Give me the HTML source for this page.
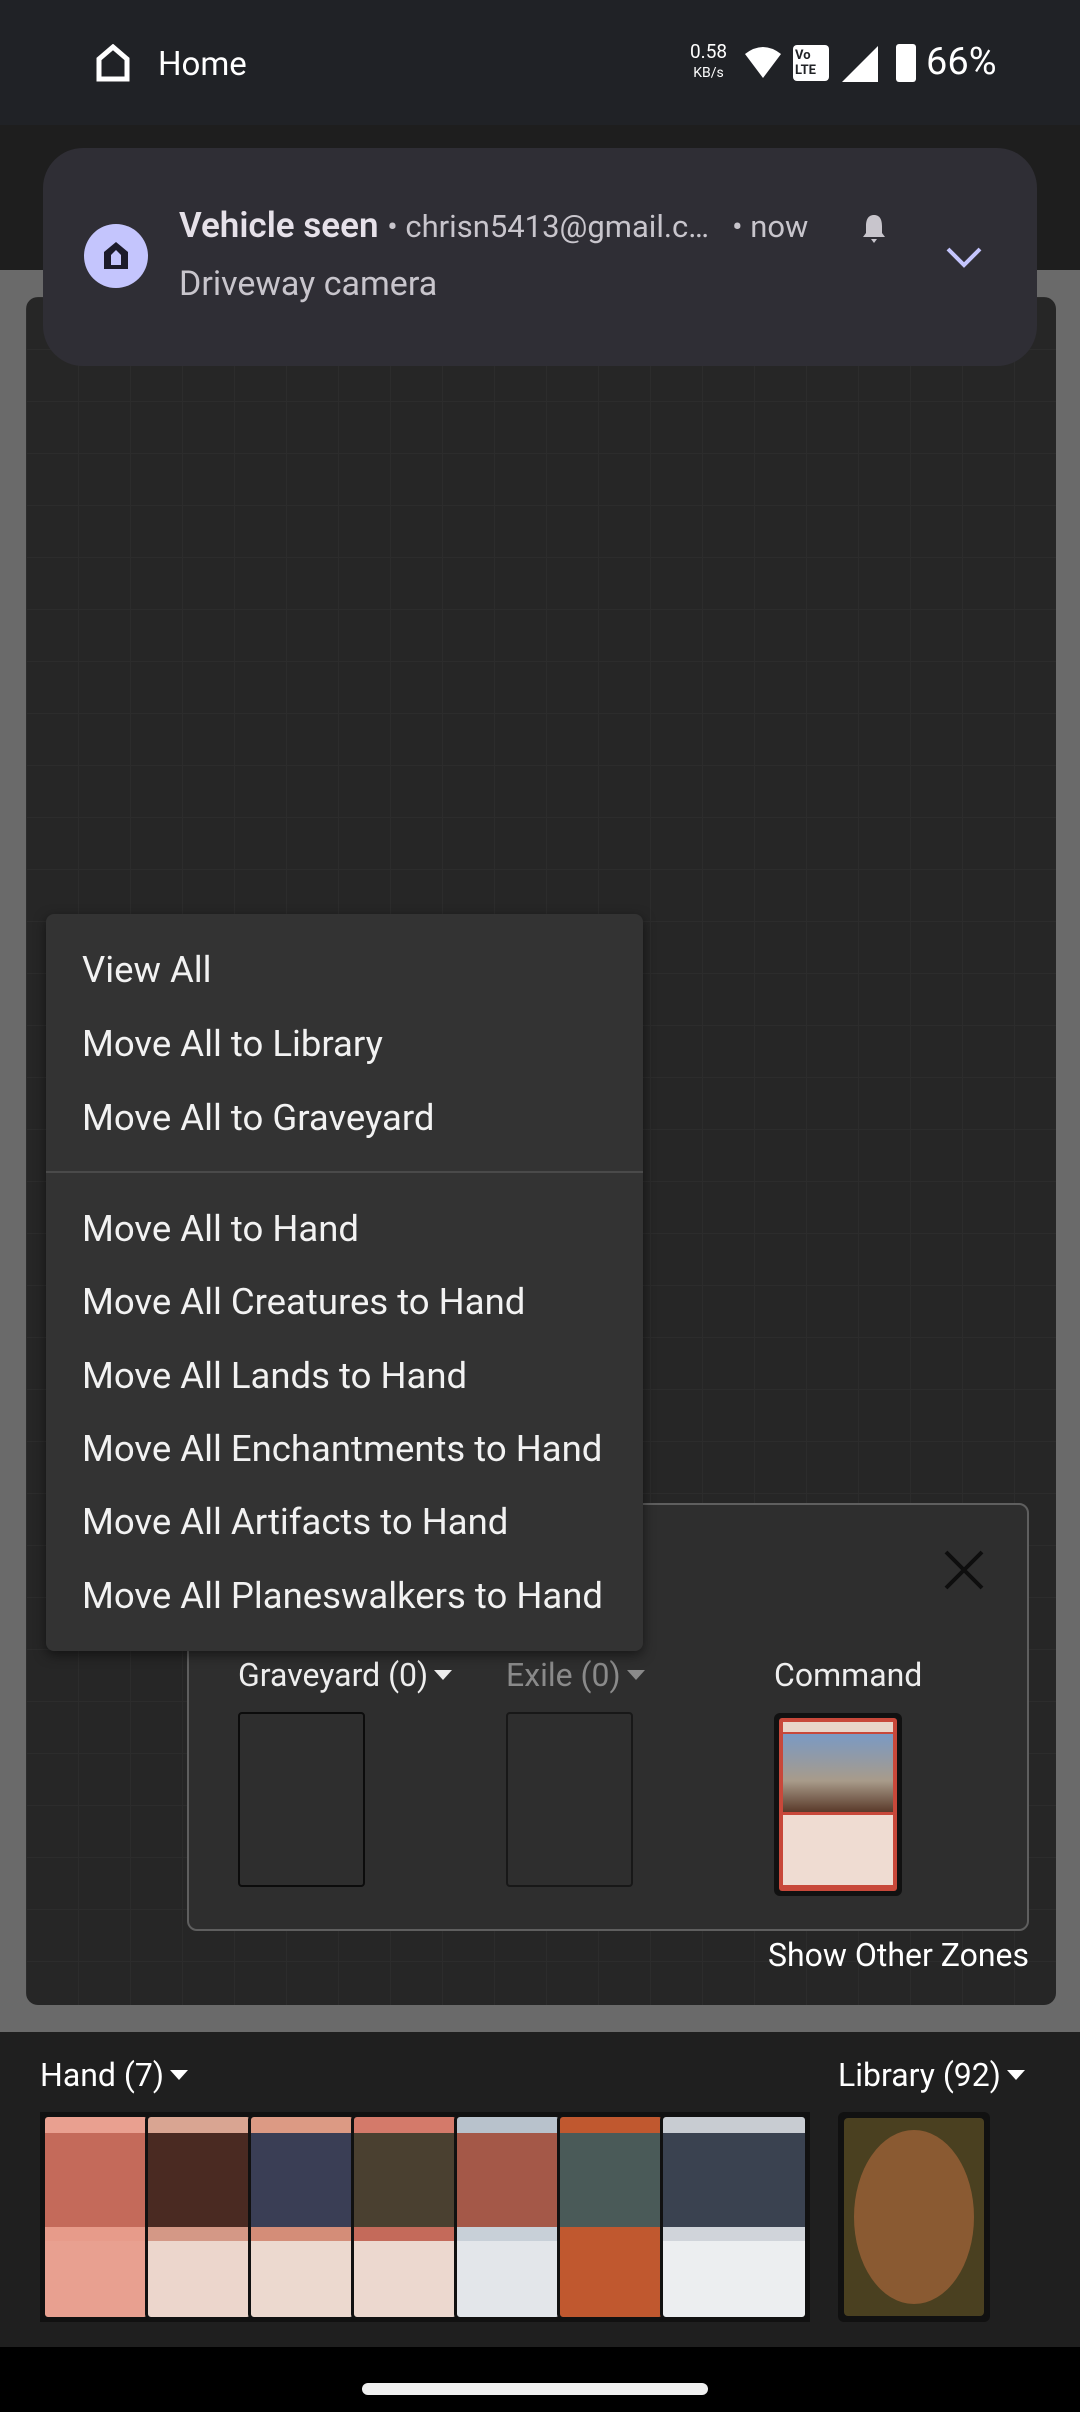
<!DOCTYPE html>
<html><head><meta charset="utf-8"><style>
*{margin:0;padding:0;box-sizing:border-box}
body{width:1080px;height:2412px;background:#6a6a6a;font-family:"Roboto","Liberation Sans",sans-serif;color:#fff;position:relative;overflow:hidden}
.abs{position:absolute}
.mi{position:absolute;left:36px;font-size:36.5px;color:#f2f2f2;white-space:nowrap}
.card{position:absolute;top:2114px;height:206px;border-radius:6px;overflow:hidden;border:3px solid #111}
.ar{display:inline-block;width:0;height:0;border-left:9px solid transparent;border-right:9px solid transparent;border-top:10px solid currentColor;vertical-align:middle;margin-left:6px;margin-top:-6px}
</style></head><body>
<div class="abs" style="left:0;top:0;width:1080px;height:125px;background:#202226"></div>
<div class="abs" style="left:0;top:125px;width:1080px;height:145px;background:#1e1e1e"></div>
<svg class="abs" style="left:96px;top:44px" width="34" height="38" viewBox="0 0 34 38"><path d="M3 35V15L17 3L31 15V35Z" fill="none" stroke="#fff" stroke-width="5"/></svg>
<div class="abs" style="left:158px;top:45px;font-size:33px">Home</div>
<div class="abs" style="left:690px;top:42px;font-size:19px;line-height:19px;text-align:center">0.58<br><span style="font-size:14px">KB/s</span></div>
<svg class="abs" style="left:743px;top:46px" width="40" height="34"><path d="M2 8Q20 -6 38 8L20 32Z" fill="#fff"/></svg>
<div class="abs" style="left:793px;top:45px;width:36px;height:36px;background:#fff;border-radius:4px;color:#202226;font-size:13px;line-height:15px;padding:3px 2px;font-weight:bold">Vo<br>LTE</div>
<svg class="abs" style="left:842px;top:46px" width="36" height="36"><path d="M36 0V36H0Z" fill="#fff"/></svg>
<div class="abs" style="left:896px;top:44px;width:20px;height:38px;background:#fff;border-radius:3px"></div>
<div class="abs" style="left:926px;top:40px;font-size:38px">66%</div>

<div class="abs" style="left:26px;top:297px;width:1030px;height:1708px;background-color:#262626;border-radius:12px;background-image:linear-gradient(#2c2c2c 1px,transparent 1px),linear-gradient(90deg,#2c2c2c 1px,transparent 1px);background-size:52px 52px"></div>

<div class="abs" style="left:43px;top:148px;width:994px;height:218px;background:#2f2e35;border-radius:40px"></div>
<div class="abs" style="left:84px;top:224px;width:64px;height:64px;border-radius:50%;background:#c4c5fd"></div>
<svg class="abs" style="left:100px;top:238px" width="32" height="34"><path d="M4 31V14L16 4L28 14V31Z" fill="#1c1b2a"/><path d="M11 27V17L16 12L21 17V27Z" fill="#c4c5fd"/></svg>
<div class="abs" style="left:179px;top:205px;font-size:35px;color:#e6e1e9;white-space:nowrap"><b style="font-weight:600">Vehicle seen</b> <span style="font-size:31px;color:#c8c5cc">• chrisn5413@gmail.c…&nbsp;&nbsp; • now</span></div>
<svg class="abs" style="left:860px;top:212px" width="28" height="32"><path d="M14 3C8 3 6 8 6 14V21L3 25H25L22 21V14C22 8 20 3 14 3ZM11 27H17L14 31Z" fill="#c8c5cc"/></svg>
<div class="abs" style="left:179px;top:264px;font-size:34px;color:#c8c5cc">Driveway camera</div>
<svg class="abs" style="left:944px;top:245px" width="40" height="24"><path d="M4 4L20 20L36 4" fill="none" stroke="#c4c5fd" stroke-width="4"/></svg>

<div class="abs" style="left:187px;top:1503px;width:842px;height:428px;background:#2e2e2e;border:2px solid #5f5f5f;border-radius:10px"></div>
<svg class="abs" style="left:944px;top:1550px" width="40" height="40"><path d="M2 2L38 38M38 2L2 38" stroke="#0e0e0e" stroke-width="4"/></svg>
<div class="abs" style="left:238px;top:1656px;font-size:32px;color:#eee">Graveyard (0)<span class="ar"></span></div>
<div class="abs" style="left:506px;top:1656px;font-size:32px;color:#8a8a8a">Exile (0)<span class="ar"></span></div>
<div class="abs" style="left:774px;top:1656px;font-size:32px;color:#eee">Command</div>
<div class="abs" style="left:238px;top:1712px;width:127px;height:175px;border:2px solid #0c0c0c;border-radius:4px"></div>
<div class="abs" style="left:506px;top:1712px;width:127px;height:175px;border:2px solid #181818;border-radius:4px"></div>
<div class="abs" style="left:774px;top:1713px;width:128px;height:183px;background:#111;border-radius:6px;padding:5px">
<div style="height:100%;background:#c8483a;border-radius:3px;padding:4px">
<div style="height:10px;background:#e9d5c9"></div>
<div style="height:78px;background:linear-gradient(#7a9ac4,#a89b8a 60%,#5a3a2a);margin-top:2px"></div>
<div style="height:70px;background:#efdcd2;margin-top:3px"></div></div></div>
<div class="abs" style="left:1029px;top:1936px;font-size:32px;transform:translateX(-100%);white-space:nowrap">Show Other Zones</div>

<div class="abs" style="left:46px;top:914px;width:597px;height:737px;background:#333333;border-radius:8px;box-shadow:0 4px 12px rgba(0,0,0,.5)">
<div class="mi" style="top:34px">View All</div>
<div class="mi" style="top:108px">Move All to Library</div>
<div class="mi" style="top:182px">Move All to Graveyard</div>
<div class="abs" style="left:0;top:257px;width:597px;height:2px;background:#4a4a4a"></div>
<div class="mi" style="top:293px">Move All to Hand</div>
<div class="mi" style="top:366px">Move All Creatures to Hand</div>
<div class="mi" style="top:440px">Move All Lands to Hand</div>
<div class="mi" style="top:513px">Move All Enchantments to Hand</div>
<div class="mi" style="top:586px">Move All Artifacts to Hand</div>
<div class="mi" style="top:660px">Move All Planeswalkers to Hand</div>
</div>

<div class="abs" style="left:0;top:2032px;width:1080px;height:316px;background:#1f1f1f"></div>
<div class="abs" style="left:40px;top:2056px;font-size:32px">Hand (7)<span class="ar"></span></div>
<div class="abs" style="left:838px;top:2056px;font-size:32px">Library (92)<span class="ar"></span></div>
<div class="abs" style="left:40px;top:2112px;width:770px;height:210px;background:#111"></div>
<div class="card" style="left:42px;width:108px;background:linear-gradient(#e9a090 0 8%,#c46a5a 8% 55%,#e79b8a 55% 62%,#e8a090 62%)"></div>
<div class="card" style="left:145px;width:108px;background:linear-gradient(#d9a592 0 8%,#4a2a22 8% 55%,#d49886 55% 62%,#ecd6cc 62%)"></div>
<div class="card" style="left:248px;width:108px;background:linear-gradient(#dc9a84 0 8%,#3a3e55 8% 55%,#d48d78 55% 62%,#ecd9cf 62%)"></div>
<div class="card" style="left:351px;width:108px;background:linear-gradient(#d47a6a 0 8%,#4a4030 8% 55%,#c46a5a 55% 62%,#ecd8cf 62%)"></div>
<div class="card" style="left:454px;width:108px;background:linear-gradient(#b8c2cc 0 8%,#a45848 8% 55%,#c8d0d8 55% 62%,#e3e6ea 62%)"></div>
<div class="card" style="left:557px;width:108px;background:linear-gradient(#c0582f 0 8%,#4a5a58 8% 55%,#c0582f 55%)"></div>
<div class="card" style="left:660px;width:148px;background:linear-gradient(#c8ccd2 0 8%,#3a4250 8% 55%,#d0d4da 55% 62%,#eceef0 62%)"></div>
<div class="abs" style="left:838px;top:2112px;width:152px;height:210px;background:#111;border-radius:6px;padding:6px">
<div style="width:100%;height:100%;background:#4a4020;border-radius:4px;padding:12px 10px"><div style="width:100%;height:100%;background:#8a5a32;border-radius:50%"></div></div></div>
<div class="abs" style="left:0;top:2347px;width:1080px;height:65px;background:#000"></div>
<div class="abs" style="left:362px;top:2383px;width:346px;height:12px;background:#f0f0f0;border-radius:6px"></div>
</body></html>
